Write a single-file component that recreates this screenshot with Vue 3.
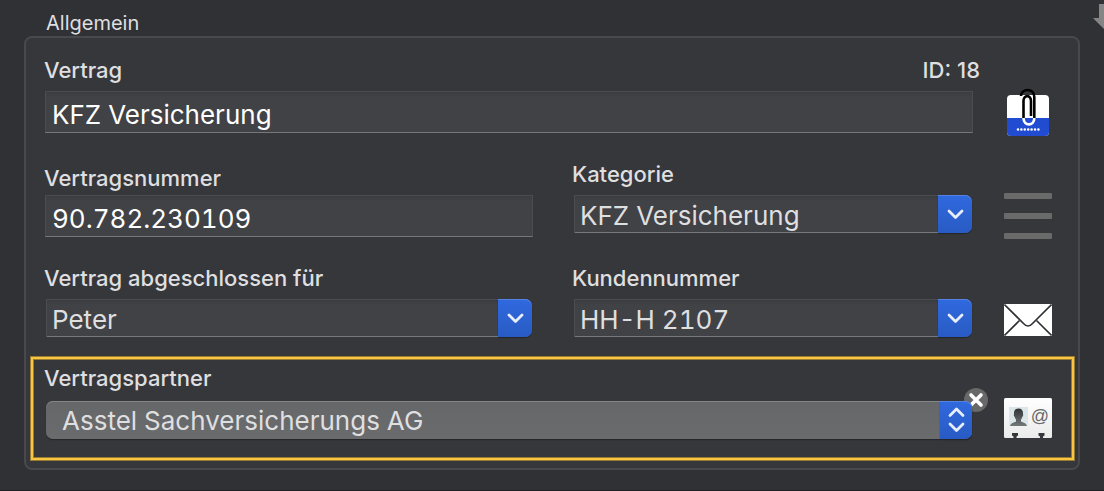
<script setup>
import { ref } from 'vue'

const contract = ref('KFZ Versicherung')
const contractNumber = ref('90.782.230109')
const category = ref('KFZ Versicherung')
const person = ref('Peter')
const customerNumber = ref('HH-H 2107')
const partner = ref('Asstel Sachversicherungs AG')
</script>

<template>
  <main class="page">
    <svg class="scroll-arrow" viewBox="0 0 22 25" aria-hidden="true">
      <path d="M6 0h10v14h6L11 25 0 14h6z" fill="#858585" />
    </svg>
    <h1 class="title">Allgemein</h1>
    <form class="panel" @submit.prevent>
      <div class="row">
        <div class="field">
          <div class="label-line">
            <label for="contract">Vertrag</label>
            <span class="record-id">ID: 18</span>
          </div>
          <input id="contract" v-model="contract" class="text-box" type="text" />
        </div>
        <button class="icon-button" type="button" aria-label="Anhang">
          <svg viewBox="0 0 48 48">
            <rect x="3" y="7" width="42" height="41" rx="4" fill="#fff" />
            <path d="M3 30h42v14a4 4 0 0 1-4 4H7a4 4 0 0 1-4-4z" fill="#214bd0" />
            <g fill="none" stroke-width="2.6">
              <path d="M17 8c0-8 13.300-8.500 13.300 1v21M19.500 30V13c0-6.500 7.500-6.500 7.500 0v15" stroke="#000" />
              <path d="M19.500 30c0 8.500 10.800 8.500 10.800 0" stroke="#fff" />
            </g>
            <path d="M14 41.500h22" stroke="#fff" stroke-width="2.600" stroke-linecap="round" stroke-dasharray="0 3.400" />
          </svg>
        </button>
      </div>

      <div class="row">
        <div class="pair">
          <div class="field">
            <label class="close" for="number">Vertragsnummer</label>
            <input id="number" v-model="contractNumber" class="text-box" type="text" />
          </div>
          <div class="field">
            <label for="category">Kategorie</label>
            <div class="combo">
              <select id="category" v-model="category">
                <option>KFZ Versicherung</option>
              </select>
              <span class="cap"><svg viewBox="0 0 34 38"><path d="M11 16l6.500 6.500L24 16" /></svg></span>
            </div>
          </div>
        </div>
        <button class="icon-button" type="button" aria-label="Menü">
          <svg viewBox="0 0 48 48">
            <g fill="#6a6a6a">
              <rect y="1" width="48" height="6" rx="1" />
              <rect y="21" width="48" height="6" rx="1" />
              <rect y="41" width="48" height="6" rx="1" />
            </g>
          </svg>
        </button>
      </div>

      <div class="row">
        <div class="pair">
          <div class="field">
            <label for="person">Vertrag abgeschlossen für</label>
            <div class="combo">
              <select id="person" v-model="person">
                <option>Peter</option>
              </select>
              <span class="cap"><svg viewBox="0 0 34 38"><path d="M11 16l6.500 6.500L24 16" /></svg></span>
            </div>
          </div>
          <div class="field">
            <label for="customer">Kundennummer</label>
            <div class="combo">
              <select id="customer" v-model="customerNumber">
                <option>HH-H 2107</option>
              </select>
              <span class="cap"><svg viewBox="0 0 34 38"><path d="M11 16l6.500 6.500L24 16" /></svg></span>
            </div>
          </div>
        </div>
        <button class="icon-button" type="button" aria-label="E-Mail">
          <svg viewBox="0 0 48 48">
            <rect y="12" width="48" height="32" rx="1" fill="#fff" />
            <g fill="none" stroke="#303135" stroke-width="1.600">
              <path d="M0.500 12.500L19.500 31.500q4.500 5 9 0L47.500 12.500" />
              <path d="M0.500 43.500L15.500 28.500M47.500 43.500L32.500 28.500" />
            </g>
          </svg>
        </button>
      </div>

      <div class="row highlight">
        <div class="field">
          <label class="loose" for="partner">Vertragspartner</label>
          <div class="combo popup">
            <button class="clear" type="button" aria-label="Auswahl löschen">
              <svg viewBox="0 0 24 24">
                <circle cx="12" cy="12" r="12" fill="#686868" />
                <path d="M7 7l10 10M17 7L7 17" stroke="#fff" stroke-width="3.600" stroke-linecap="round" />
              </svg>
            </button>
            <select id="partner" v-model="partner">
              <option>Asstel Sachversicherungs AG</option>
            </select>
            <span class="cap"><svg viewBox="0 0 32 38"><path d="M10 14.500L16.500 8 23 14.500M10 23l6.500 6.500L23 23" /></svg></span>
          </div>
        </div>
        <button class="icon-button" type="button" aria-label="Kontakt">
          <svg viewBox="0 0 48 48">
            <defs>
              <linearGradient id="card" x1="0" y1="0" x2="0" y2="1">
                <stop offset="0" stop-color="#fff" />
                <stop offset="1" stop-color="#ebebeb" />
              </linearGradient>
              <linearGradient id="bust" x1="0" y1="0" x2="0" y2="1">
                <stop offset="0" stop-color="#303435" />
                <stop offset="1" stop-color="#737879" />
              </linearGradient>
            </defs>
            <rect y="4" width="48" height="40" rx="1.500" fill="url(#card)" />
            <path d="M8 39h6v2.500l-1.500 1V44h-3v-1.500L8 41.500zM34.500 39h6v2.500l-1.500 1V44h-3v-1.500l-1.500-1z" fill="#36373a" />
            <rect x="5" y="13" width="19" height="19" fill="#dce6e9" />
            <path d="M14.500 14.500c3.200 0 4.800 2 4.500 5.500.5 1 0 2.500-.7 2.800-.3 1.500-.8 2-1.300 2.700v2c2.500 1.300 5 1.500 6 4.500H6c1-3 3.500-3.200 6-4.500v-2c-.5-.7-1-1.200-1.300-2.700-.7-.3-1.200-1.800-.7-2.800-.3-3.500 1.300-5.500 4.500-5.500z" fill="url(#bust)" />
            <text x="36" y="28" text-anchor="middle" class="at">@</text>
          </svg>
        </button>
      </div>
    </form>
  </main>
</template>

<style>
body {
  margin: 0;
  background: #303135;
}
</style>

<style scoped>
.page {
  position: relative;
  box-sizing: border-box;
  min-height: 100vh;
  padding: 11px 24px 20px;
  overflow: hidden;
  background: #303135;
  border-bottom: 1px solid #202124;
  color: #dfdfe0;
  font-family: Inter, "Liberation Sans", sans-serif;
}
.scroll-arrow {
  position: absolute;
  top: 4px;
  right: -11px;
  width: 22px;
  height: 25px;
}
.title {
  margin: 0 22px 1px;
  font-size: 20px;
  line-height: 24px;
  font-weight: 400;
}
.panel {
  display: flex;
  flex-direction: column;
  gap: 28px;
  padding: 19px 4px 8px 5px;
  border: 2px solid #48494c;
  border-radius: 8px;
  background: #36373a;
}
.row {
  display: grid;
  grid-template-columns: minmax(0, 1fr) 48px;
  column-gap: 31px;
  align-items: end;
  padding: 0 22px 0 14px;
}
.highlight {
  margin-top: -8px;
  padding: 6px 20px 19px 12px;
  border: 2px solid #f8c640;
  box-shadow: 0 0 0 1px #987c34, inset 0 0 0 1px #987c34;
}
.pair {
  display: grid;
  grid-template-columns: 61fr 50fr;
  column-gap: 40px;
}
.field {
  display: flex;
  flex-direction: column;
  min-width: 0;
}
label,
.record-id {
  font-size: 22px;
  font-weight: 450;
  line-height: 26px;
}
label {
  margin: 0 0 8px -1px;
}
.close {
  margin-top: 4px;
  margin-bottom: 4px;
}
.loose {
  margin-bottom: 10px;
}
.label-line {
  display: flex;
  justify-content: space-between;
}
.record-id {
  margin-right: -7px;
}
.text-box,
select {
  box-sizing: border-box;
  width: 100%;
  margin: 0;
  border: 1px solid #4b4c4f;
  border-bottom: 1px solid #77787a;
  border-radius: 0;
  outline: none;
  background: linear-gradient(#3b3c3f, #414245 5px);
  color: inherit;
  font: 26px/32px Inter, "Liberation Sans", sans-serif;
  font-variant-numeric: tabular-nums;
}
.text-box {
  height: 42px;
  padding: 5px 6px 0;
  color: #fff;
}
.combo {
  position: relative;
  display: flex;
  height: 38px;
  margin: 0 1px;
}
select {
  height: 38px;
  padding: 4px 40px 0 5px;
  border-radius: 0 7px 7px 0;
  appearance: none;
}
.cap {
  position: absolute;
  top: 0;
  right: 0;
  width: 34px;
  height: 38px;
  border-radius: 0 7px 7px 0;
  background: linear-gradient(#3069df, #285bc3);
  box-shadow: inset 0 1px #5583e2, 0 1px 1px #25262a;
  pointer-events: none;
}
.cap svg,
.icon-button svg,
.clear svg {
  display: block;
  width: 100%;
  height: 100%;
}
.cap path {
  fill: none;
  stroke: #e6edfb;
  stroke-width: 2.8;
  stroke-linecap: round;
  stroke-linejoin: round;
}
.popup select {
  position: relative;
  padding: 2px 40px 0 16px;
  border: 0;
  border-radius: 7px;
  background: linear-gradient(#666769, #6a6b6c);
  box-shadow: inset 0 1px #858687, 0 1px 1px #25262a;
}
.popup .cap {
  width: 32px;
}
.icon-button,
.clear {
  padding: 0;
  border: 0;
  background: none;
}
.icon-button {
  width: 48px;
  height: 48px;
  margin: 0 0 -3px;
}
.clear {
  position: absolute;
  top: -13px;
  right: -16px;
  width: 24px;
  height: 24px;
}
.at {
  fill: #68696a;
  font: 18px "Liberation Sans", sans-serif;
}
</style>
